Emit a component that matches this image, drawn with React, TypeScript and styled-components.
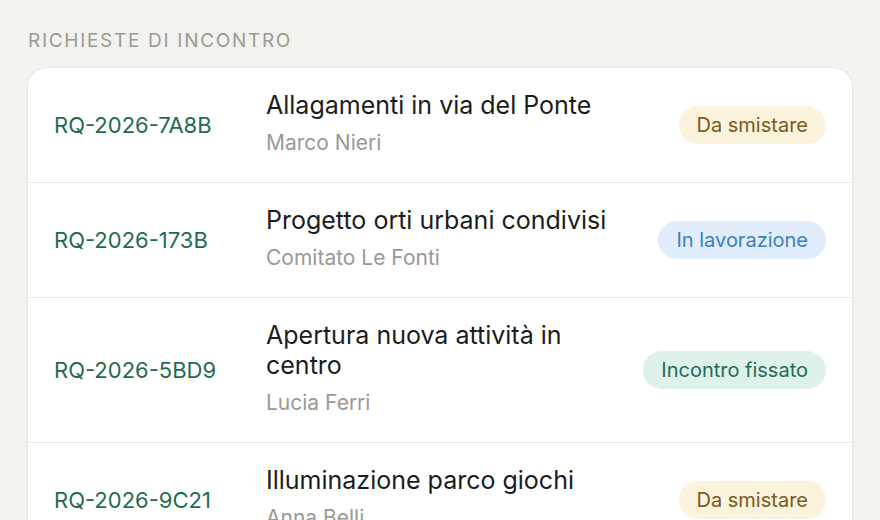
import React from "react";
import styled, { createGlobalStyle } from "styled-components";

const GlobalStyle = createGlobalStyle`
  html, body {
    margin: 0;
    padding: 0;
    background: #f3f2ef;
  }
  body {
    font-family: Inter, "Noto Sans", "Liberation Sans", sans-serif;
    -webkit-font-smoothing: antialiased;
  }
`;

const Page = styled.div`
  padding: 29px 28px 0;
  height: 520px;
  box-sizing: border-box;
  overflow: hidden;
`;

const Heading = styled.h2`
  margin: 0 0 15px;
  font-size: 19px;
  line-height: 24px;
  font-weight: 400;
  letter-spacing: 1.7px;
  color: #9b9993;
  text-transform: uppercase;
`;

const Card = styled.div`
  background: #ffffff;
  border-radius: 20px;
  box-shadow: 0 1px 3px rgba(40, 35, 25, 0.06), 0 0 0 1px rgba(40, 35, 25, 0.03);
  overflow: hidden;
`;

const Row = styled.div`
  display: grid;
  grid-template-columns: 188px 1fr auto;
  column-gap: 24px;
  align-items: center;
  padding: 22px 26px 26px;
  border-bottom: 1px solid #ebe9e5;
  &:last-child {
    border-bottom: none;
  }
`;

const Code = styled.div`
  font-size: 22px;
  color: #1f6b52;
  margin-top: 4px;
`;

const Info = styled.div`
  display: flex;
  flex-direction: column;
`;

const Title = styled.div`
  font-size: 25px;
  line-height: 30px;
  color: #1c1c1c;
`;

const Author = styled.div`
  margin-top: 10px;
  font-size: 21px;
  line-height: 26px;
  color: #9a9995;
`;

type Tone = "pending" | "working" | "scheduled";

const tones: Record<Tone, { bg: string; fg: string }> = {
  pending: { bg: "#fcf3dc", fg: "#7a5a1f" },
  working: { bg: "#e1edfb", fg: "#3b7fc1" },
  scheduled: { bg: "#dff2ea", fg: "#246b55" },
};

const Badge = styled.span<{ $tone: Tone }>`
  display: inline-flex;
  align-items: center;
  height: 38px;
  margin-top: 4px;
  padding: 0 18px;
  border-radius: 19px;
  font-size: 20px;
  white-space: nowrap;
  background: ${(p) => tones[p.$tone].bg};
  color: ${(p) => tones[p.$tone].fg};
`;

const requests: { id: string; title: string; by: string; status: string; tone: Tone }[] = [
  { id: "RQ-2026-7A8B", title: "Allagamenti in via del Ponte", by: "Marco Nieri", status: "Da smistare", tone: "pending" },
  { id: "RQ-2026-173B", title: "Progetto orti urbani condivisi", by: "Comitato Le Fonti", status: "In lavorazione", tone: "working" },
  { id: "RQ-2026-5BD9", title: "Apertura nuova attività in centro", by: "Lucia Ferri", status: "Incontro fissato", tone: "scheduled" },
  { id: "RQ-2026-9C21", title: "Illuminazione parco giochi", by: "Anna Belli", status: "Da smistare", tone: "pending" },
];

export default function App() {
  return (
    <Page>
      <GlobalStyle />
      <Heading>Richieste di incontro</Heading>
      <Card>
        {requests.map((r) => (
          <Row key={r.id}>
            <Code>{r.id}</Code>
            <Info>
              <Title>{r.title}</Title>
              <Author>{r.by}</Author>
            </Info>
            <Badge $tone={r.tone}>{r.status}</Badge>
          </Row>
        ))}
      </Card>
    </Page>
  );
}
